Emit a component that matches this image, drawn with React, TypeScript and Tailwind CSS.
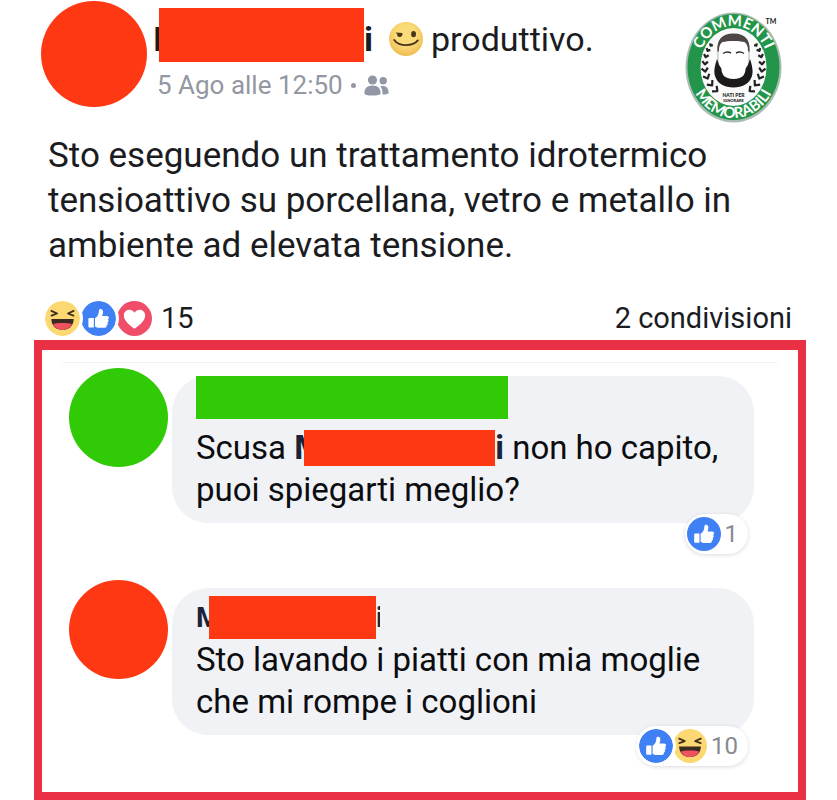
import type { ReactNode } from 'react';

type IconProps = { className?: string };

const LikeIcon = ({ className }: IconProps) => (
  <svg viewBox="0 0 36 36" className={className} aria-hidden="true">
    <circle cx="18" cy="18" r="18" fill="#4080f5" />
    <path fill="#fff" d="M8.5 17.5h4.7v9.7H8.5a.9.9 0 0 1-.9-.9v-7.9c0-.5.4-.9.9-.9z" />
    <path
      fill="#fff"
      d="M14.4 17.7c2.5-1.6 3.9-4 4-7.5 0-1.4.8-2 1.8-2 1.7 0 2.6 1.5 2.4 3.6-.1 1.4-.5 2.6-1 3.6h5c1.3 0 2.1.8 2.1 1.9 0 .9-.5 1.5-1.2 1.8.6.3.9.9.8 1.6-.1.8-.6 1.3-1.3 1.5.5.4.7.9.5 1.6-.2.7-.7 1.1-1.4 1.2.3.4.4.8.2 1.3-.2.8-.9 1.2-2 1.2h-5.5c-1.8 0-3.100-.6-4.400-1.400z"
    />
  </svg>
);

const LoveIcon = ({ className }: IconProps) => (
  <svg viewBox="0 0 36 36" className={className} aria-hidden="true">
    <circle cx="18" cy="18" r="18" fill="#ef4d68" />
    <path
      fill="#fff"
      d="M18 28.500c-1.200-1-11-6.800-11-13.600 0-3.300 2.500-6 5.600-6 2.300 0 4.300 1.200 5.400 3.200 1.100-2 3.100-3.200 5.400-3.200 3.100 0 5.600 2.700 5.600 6 0 6.800-9.800 12.600-11 13.600z"
    />
  </svg>
);

const LaughIcon = ({ className }: IconProps) => (
  <svg viewBox="0 0 36 36" className={className} aria-hidden="true">
    <circle cx="18" cy="18" r="18" fill="#fcd872" />
    <path
      d="M6.500 10.200l6 2.600-5.800 2.200M29.500 10.200l-6 2.600 5.800 2.200"
      fill="none"
      stroke="#3b2f1c"
      strokeWidth="1.800"
      strokeLinecap="round"
      strokeLinejoin="round"
    />
    <path fill="#3a2a22" d="M6.500 18.500h23c0 6.800-4.700 11.200-11.500 11.200S6.500 25.300 6.500 18.500z" />
    <path fill="#f0525f" d="M8.200 24c2.600-1.800 17-1.800 19.600 0-1.900 3.700-5.500 5.700-9.800 5.700S10.100 27.700 8.200 24z" />
  </svg>
);

const SmirkIcon = ({ className }: IconProps) => (
  <svg viewBox="0 0 36 36" className={className} aria-hidden="true">
    <defs>
      <radialGradient id="smirk" cx="50%" cy="40%" r="60%">
        <stop offset="0.500" stopColor="#fbdb79" />
        <stop offset="1" stopColor="#eebc52" />
      </radialGradient>
    </defs>
    <circle cx="18" cy="18" r="18" fill="url(#smirk)" />
    <path fill="#4a3718" d="M6.800 11l7.400.6c.5 2.600-1 4.400-2.900 4.400-1.800 0-2.800-1.300-2.700-3.200z" />
    <ellipse cx="26" cy="12.800" rx="2.600" ry="3.400" fill="#4a3718" />
    <path
      d="M5.500 19c3 4 7.500 5.500 12.500 5.500S28 22.700 30.500 19.500"
      fill="none"
      stroke="#4a3718"
      strokeWidth="2"
      strokeLinecap="round"
    />
  </svg>
);

const FriendsIcon = ({ className }: IconProps) => (
  <svg viewBox="0 0 25 21" className={className} fill="#9297a6" aria-hidden="true">
    <circle cx="8.500" cy="5" r="4.600" />
    <circle cx="19.200" cy="5.800" r="3.700" />
    <path d="M.4 18.500c0-5.300 2.600-8 8.100-8s8.100 2.700 8.100 8c0 1.200-3.600 2.100-8.100 2.100S.4 19.700.4 18.500z" />
    <path d="M16.300 11.300c5.300-1.200 8.300 1.300 8.400 6.800 0 .9-2.400 1.500-6.300 1.500.3-3.400-.3-6.300-2.100-8.300z" />
  </svg>
);

// laurel leaves (x, y, angle, size), drawn for the left side and mirrored for the right
const leaves = [
  [27, 35, -35, 1.6],
  [24, 40, -25, 2],
  [22, 46, -15, 2.4],
  [21, 53, -5, 2.8],
  [21, 60, 10, 3.2],
  [23, 67, 25, 3.4],
  [27, 74, 40, 3.6],
  [32, 80, 50, 3.6],
];

const Laurel = () => (
  <g fill="none" stroke="#222" strokeWidth="2.200" strokeLinejoin="round">
    {leaves.map(([x, y, angle, size]) => (
      <path
        key={y}
        transform={`translate(${x} ${y}) rotate(${-angle})`}
        d={`M${-size} ${-size * 0.6}L0 ${size * 0.5}L${size} ${-size * 0.6}`}
      />
    ))}
  </g>
);

const BrandLogo = ({ className }: IconProps) => (
  <svg viewBox="0 0 98 114" className={className} role="img" aria-label="Commenti Memorabili">
    <defs>
      <path id="logoTop" d="M14.500 57a35 41 0 0 1 70 0" />
      <path id="logoBottom" d="M5 57a44.500 51 0 0 0 89 0" />
    </defs>
    <ellipse cx="49.500" cy="57.500" rx="48" ry="55" fill="#a9bcb1" />
    <ellipse cx="49.500" cy="57" rx="46" ry="53" fill="#23954a" />
    <ellipse cx="49.500" cy="57" rx="33" ry="39" fill="#fafafa" />
    <g fill="#fff" fontFamily="Lato, sans-serif" fontWeight="700" textAnchor="middle">
      <text fontSize="15">
        <textPath href="#logoTop" startOffset="50%">COMMENTI</textPath>
      </text>
      <text fontSize="15">
        <textPath href="#logoBottom" startOffset="50%">MEMORABILI</textPath>
      </text>
    </g>
    <Laurel />
    <g transform="translate(99 0) scale(-1 1)">
      <Laurel />
    </g>
    <path
      fill="#fff"
      stroke="#666"
      strokeWidth="0.500"
      d="M34 39c0-10 5-14 15.500-14S65 29 65 39v22H34z"
    />
    <path
      fill="#4d4644"
      d="M33.500 42c-1-12 4-18.500 16-18.500s17 6.500 16 18.500l-1.500-1c0-5-1-7-3.500-9-5-1.500-17-1.500-22 0-2.500 2-3.500 4-3.500 9z"
    />
    <path
      fill="#1c1a1a"
      d="M33 49c1.500 4 2 7 5 10 3.500-1 5-1.500 7.500-1.500h8c2.500 0 4 .5 7.500 1.500 3-3 3.500-6 5-10 2 6 3.500 12 2 17-2.500 8-10 11.500-18.500 11.500S33.500 74 31 66c-1.500-5 0-11 2-17z"
    />
    <path fill="#fff" d="M37.500 57c4-4 20-4 24 0 .5 7-2.500 12-12 12s-12.500-5-12-12z" />
    <path
      d="M39 43.500c3-2 5-2 8-.5M52 43c3-1.500 5-1.500 8 .5"
      fill="none"
      stroke="#333"
      strokeWidth="1.500"
    />
    <g fill="#222" fontFamily="Lato, sans-serif" fontWeight="900" textAnchor="middle">
      <text x="49.500" y="87" fontSize="5">NATI PER</text>
      <text x="49.500" y="91.500" fontSize="4">IGNORARE</text>
      <text x="87" y="14" fontSize="7" fontWeight="700">TM</text>
    </g>
  </svg>
);

type CommentProps = {
  avatar: string;
  name: ReactNode;
  children: ReactNode;
  reactions: ReactNode;
  count: number;
};

const Comment = ({ avatar, name, children, reactions, count }: CommentProps) => (
  <article className="flex items-start gap-1">
    <div className={`size-[99px] shrink-0 rounded-full ${avatar}`} />
    <div className="relative mt-2 min-w-0 flex-1 rounded-[36px] bg-[#f1f2f5] px-6 pb-3">
      {name}
      <p className="text-[33px] leading-[42px] text-[#0c0d10]">{children}</p>
      <button
        type="button"
        aria-label={`${count} reazioni`}
        className="absolute top-full right-1.5 -mt-[9px] flex h-10 items-center rounded-full bg-white pr-2.5 pl-0.5 text-[24px] text-[#868a91] shadow-[0_1px_4px_rgba(0,0,0,0.15)]"
      >
        {reactions}
        <span className="pl-1">{count}</span>
      </button>
    </div>
  </article>
);

const App = () => {
  return (
    <main className="bg-white pr-[31px] pl-[34px] font-[Roboto,sans-serif] text-[#1b1c1f]">
      <header className="flex items-start pr-6 pb-px pl-[7px]">
        <div className="mt-px size-[106px] shrink-0 rounded-full bg-[#ff3814]" />
        <div className="ml-1.5 flex-1 pt-2">
          <h1 className="flex h-[62px] items-center text-[34px]">
            <b className="w-1.5 overflow-hidden">I</b>
            <span className="h-[54px] w-[205px] self-start bg-[#ff3814]" />
            <b>i</b>
            <SmirkIcon className="mr-2 ml-4 size-[34px]" />
            produttivo.
          </h1>
          <p className="flex items-center gap-2 pl-1 text-[26px] leading-[30px] text-[#9297a1]">
            5 Ago alle 12:50
            <span className="size-[5px] rounded-full bg-[#9297a1]" />
            <FriendsIcon className="h-[21px] w-[25px]" />
          </p>
        </div>
        <BrandLogo className="mt-2.5 h-[114px] w-[98px]" />
      </header>

      <p className="pt-2 pl-3.5 text-[35px] leading-[45px]">
        Sto eseguendo un trattamento idrotermico tensioattivo su porcellana, vetro e metallo in
        ambiente ad elevata tensione.
      </p>

      <div className="flex h-[72px] items-end justify-between pr-3.5 pb-1 pl-[11px] text-[29px] leading-9">
        <button type="button" aria-label="15 reazioni" className="flex items-center gap-px">
          <LaughIcon className="z-20 size-[35px] rounded-full ring-3 ring-white" />
          <LikeIcon className="z-10 size-[35px] rounded-full ring-3 ring-white" />
          <LoveIcon className="size-[35px]" />
          <span className="pl-2">15</span>
        </button>
        <a href="#condivisioni">2 condivisioni</a>
      </div>

      <section className="border-x-8 border-t-10 border-b-8 border-[#e93045] pt-3">
        <div className="mx-5 h-px bg-[#f3f3f5]" />
        <div className="flex flex-col gap-[57px] pt-[5px] pr-11 pb-[57px] pl-[27px]">
          <Comment
            avatar="bg-[#30ca06]"
            name={<div className="mb-2 h-[43px] w-[312px] bg-[#30ca06]" />}
            reactions={<LikeIcon className="size-[34px]" />}
            count={1}
          >
            Scusa{' '}
            <b className="inline-flex items-center align-top text-[#1c2238]">
              <span className="w-2.5 overflow-hidden">M</span>
              <span className="h-9 w-[191px] bg-[#ff3814]" />i
            </b>{' '}
            non ho capito, puoi spiegarti meglio?
          </Comment>
          <Comment
            avatar="bg-[#ff3814]"
            name={
              <h2 className="flex items-center pt-2 text-[28px] font-bold text-[#1c2238]">
                <span className="w-[13px] overflow-hidden">M</span>
                <span className="h-[43px] w-[167px] bg-[#ff3814]" />
                <span className="w-1 overflow-hidden">i</span>
              </h2>
            }
            reactions={
              <>
                <LikeIcon className="z-10 size-[34px] rounded-full ring-3 ring-white" />
                <LaughIcon className="size-[34px]" />
              </>
            }
            count={10}
          >
            Sto lavando i piatti con mia moglie che mi rompe i coglioni
          </Comment>
        </div>
      </section>
    </main>
  );
};

export default App;
